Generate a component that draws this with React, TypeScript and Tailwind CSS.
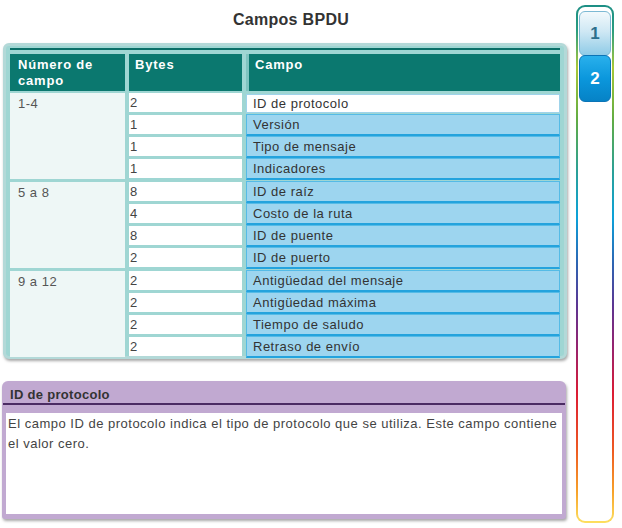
const groups = [
  {
    label: "1-4",
    rows: [
      { bytes: "2", campo: "ID de protocolo" },
      { bytes: "1", campo: "Versión" },
      { bytes: "1", campo: "Tipo de mensaje" },
      { bytes: "1", campo: "Indicadores" },
    ],
  },
  {
    label: "5 a 8",
    rows: [
      { bytes: "8", campo: "ID de raíz" },
      { bytes: "4", campo: "Costo de la ruta" },
      { bytes: "8", campo: "ID de puente" },
      { bytes: "2", campo: "ID de puerto" },
    ],
  },
  {
    label: "9 a 12",
    rows: [
      { bytes: "2", campo: "Antigüedad del mensaje" },
      { bytes: "2", campo: "Antigüedad máxima" },
      { bytes: "2", campo: "Tiempo de saludo" },
      { bytes: "2", campo: "Retraso de envío" },
    ],
  },
];

const selected = "ID de protocolo";

const CampoCell = ({ text }: { text: string }) =>
  text === selected ? (
    <div className="h-[22px] pt-[2px] pb-[1px]">
      <div className="h-full bg-white border border-[#9fd3ea] pl-[6px] flex items-center text-[13px] tracking-[0.5px] text-[#333]">
        {text}
      </div>
    </div>
  ) : (
    <div className="h-[22px] bg-[#9dd5ef] border-x border-t border-[#55bbe6] border-b-2 border-b-[#24a3dd] pl-[6px] flex items-center text-[13px] tracking-[0.5px] text-[#333]">
      {text}
    </div>
  );

const Sidebar = () => (
  <div className="w-[38px] h-[518px] mt-[5px] ml-[4px] rounded-[9px] p-[2px] bg-[linear-gradient(to_bottom,#1d8f85_0%,#2a9d80_5%,#a8c838_12%,#62ac42_22%,#2ba096_32%,#0ba2da_41%,#2e64b2_50%,#5c3592_58%,#96236f_66%,#dc1c34_75%,#ee5a22_86%,#f7a22a_94%,#fde060_100%)]">
    <div className="h-full rounded-[7px] bg-white pt-[4px] px-[1px] flex flex-col">
      <div className="h-[45px] rounded-[6px] border border-[#7cb9d4] bg-[linear-gradient(to_bottom,#f2f9fc,#cfe8f4_45%,#8fcbe7)] flex items-center justify-center text-[17px] font-bold text-[#2d6f8c]">
        1
      </div>
      <div className="h-[47px] -mt-[1px] rounded-[6px] border border-[#0b74b6] bg-[linear-gradient(to_bottom,#29b0ec,#0b97dc_50%,#0682c6)] flex items-center justify-center text-[17px] font-bold text-white">
        2
      </div>
    </div>
  </div>
);

export default function App() {
  return (
    <div className="w-[622px] h-[528px] bg-white flex font-['Liberation_Sans',Arial,sans-serif] overflow-hidden">
      <div className="w-[572px] flex flex-col">
        <div className="h-[43px] pt-[8px] text-center text-[16px] font-bold tracking-[0.3px] text-[#333] pl-[10px]">Campos BPDU</div>

        <div className="ml-[3px] w-[564px] h-[316px] rounded-[6px] border-[3px] border-[#b3d9d8] bg-[#9fd6d3] shadow-[1px_2px_3px_rgba(0,0,0,0.35)] px-[4px] pt-[2px]">
          <div className="h-[2px] bg-[#0b6f68]" />
          <div className="mt-[4px] h-[37px] grid grid-cols-[115px_113px_314px] gap-x-[4px]">
            <div className="bg-[#0b786f] pl-[8px] pt-[3px] text-[13px] leading-[16px] font-bold tracking-[0.8px] text-white">
              Número de
              <br />
              campo
            </div>
            <div className="bg-[#0b786f] pl-[6px] pt-[3px] text-[13px] leading-[16px] font-bold tracking-[0.8px] text-white">Bytes</div>
            <div className="bg-[#0b786f] pl-[6px] pt-[3px] text-[13px] leading-[16px] font-bold tracking-[0.8px] text-white border-l-[3px] border-[#7fc4c0]">
              Campo
            </div>
          </div>
          <div className="mt-[2px] flex flex-col gap-[3px]">
            {groups.map((g) => (
              <div key={g.label} className="grid grid-cols-[115px_113px_314px] gap-x-[4px] -mb-[1px]">
                <div className="bg-[#eef7f6] pl-[8px] pt-[2px] text-[13px] leading-[18px] tracking-[0.5px] text-[#555] mb-[1px]">{g.label}</div>
                <div className="flex flex-col gap-[3px]">
                  {g.rows.map((r, i) => (
                    <div key={i} className="h-[19px] bg-white pl-[1px] flex items-center text-[13px] text-[#444]">
                      {r.bytes}
                    </div>
                  ))}
                </div>
                <div className="flex flex-col -mt-[1px]">
                  {g.rows.map((r) => (
                    <CampoCell key={r.campo} text={r.campo} />
                  ))}
                </div>
              </div>
            ))}
          </div>
        </div>

        <div className="mt-[22px] ml-[2px] w-[564px] h-[138px] rounded-t-[6px] rounded-b-[3px] bg-[#c1a9d1] shadow-[1px_2px_3px_rgba(0,0,0,0.35)] px-[1px] pb-[5px] flex flex-col">
          <div className="h-[22px] pl-[7px] pt-[6px] text-[13px] leading-[16px] font-bold tracking-[0.3px] text-[#333]">ID de protocolo</div>
          <div className="h-[2px] bg-[#4b2b63]" />
          <div className="mt-[8px] mx-[3px] flex-1 bg-white pl-[2px] pr-[2px] pt-[1px] text-[13px] leading-[20px] tracking-[0.5px] text-[#444]">
            El campo ID de protocolo indica el tipo de protocolo que se utiliza. Este campo contiene el valor cero.
          </div>
        </div>
      </div>
      <Sidebar />
    </div>
  );
}
